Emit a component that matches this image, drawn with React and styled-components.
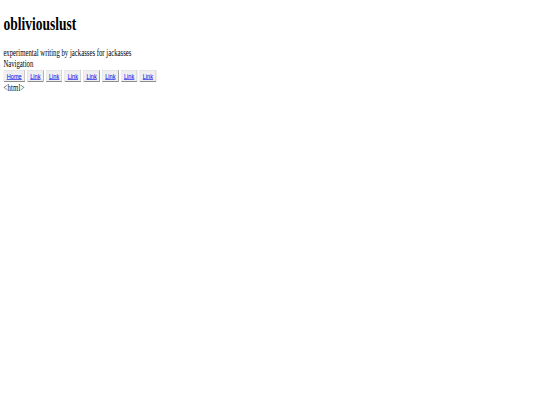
import React from "react";
import styled, { createGlobalStyle } from "styled-components";

const Global = createGlobalStyle`
  html, body {
    margin: 0;
    padding: 0;
    background: #ffffff;
    overflow: hidden;
  }
`;

const Frame = styled.div`
  width: 540px;
  height: 405px;
  overflow: hidden;
  background: #ffffff;
`;

const Viewport = styled.div`
  display: flow-root;
  width: 1280px;
  height: 675px;
  transform: scale(0.421875, 0.6);
  transform-origin: 0 0;
  background: #ffffff;
`;

const Document = styled.div`
  margin: 8px;
  font-family: "Liberation Serif", "Times New Roman", serif;
  font-size: 16px;
  color: #000000;
`;

const Title = styled.h1`
  font-size: 2em;
  font-weight: bold;
  margin: 0.67em 0;
`;

const Tagline = styled.div``;

const NavLabel = styled.div``;

const NavRow = styled.div``;

const NavButton = styled.button`
  font-family: "Liberation Sans", Arial, sans-serif;
  font-size: 13.333px;
  padding: 1px 6px;
  border: 2px outset #e0e0e0;
  border-radius: 3px;
  background: #efefef;
  color: #000;
  margin: 0;
`;

const NavLink = styled.a`
  color: #0000ee;
  text-decoration: underline;
`;

const Trailer = styled.div`
  letter-spacing: 0.5px;
`;

const links = ["Home", "Link", "Link", "Link", "Link", "Link", "Link", "Link"];

export default function App() {
  return (
    <>
      <Global />
      <Frame>
        <Viewport>
          <Document>
            <Title>obliviouslust</Title>
            <Tagline>experimental writing by jackasses for jackasses</Tagline>
            <NavLabel>Navigation</NavLabel>
            <NavRow>
              {links.map((l, i) => (
                <React.Fragment key={i}>
                  <NavButton>
                    <NavLink href="#">{l}</NavLink>
                  </NavButton>{" "}
                </React.Fragment>
              ))}
            </NavRow>
            <Trailer>{"<html>"}</Trailer>
          </Document>
        </Viewport>
      </Frame>
    </>
  );
}
